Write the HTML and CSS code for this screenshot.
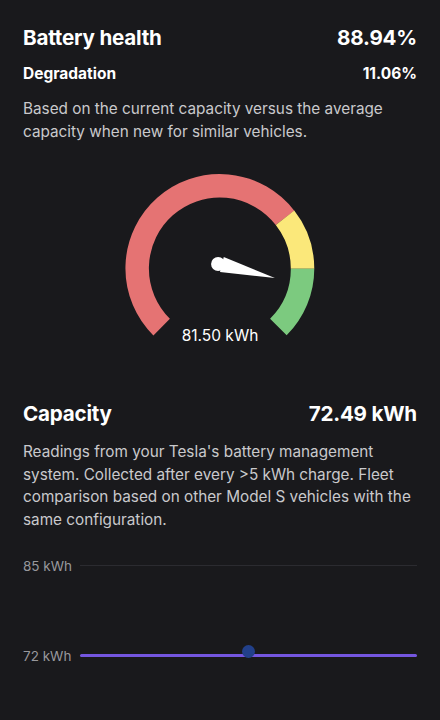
FILE: index.html
```html
<!DOCTYPE html>
<html>
<head>
<meta charset="utf-8">
<link rel="stylesheet" href="styles.css">
</head>
<body>
<main class="page">
  <section class="health">
    <div class="row title-row">
      <h1 class="title">Battery health</h1>
      <span class="title-value">88.94%</span>
    </div>
    <div class="row sub-row">
      <h2 class="subtitle">Degradation</h2>
      <span class="sub-value">11.06%</span>
    </div>
    <p class="desc">Based on the current capacity versus the average capacity when new for similar vehicles.</p>
  </section>

  <section class="gauge-wrap">
    <svg class="gauge" width="224" height="194" viewBox="0 0 224 194">
      <!-- center (112,102), r=88 ; arc from 225deg clockwise to -45deg -->
      <path d="M49.8 164.2 A88 88 0 1 1 181.3 47.8" fill="none" stroke="#e57373" stroke-width="25"/>
      <path d="M181.3 47.8 A88 88 0 0 1 200 102" fill="none" stroke="#fbe87a" stroke-width="25"/>
      <path d="M200 102 A88 88 0 0 1 174.2 164.2" fill="none" stroke="#7cca7f" stroke-width="25"/>
      <circle cx="110" cy="97" r="7.5" fill="#ffffff"/>
      <polygon points="116,89.5 170.5,112 112,105.5" fill="#ffffff"/>
    </svg>
    <div class="gauge-label">81.50 kWh</div>
  </section>

  <section class="capacity">
    <div class="row title-row">
      <h1 class="title">Capacity</h1>
      <span class="title-value">72.49 kWh</span>
    </div>
    <p class="desc">Readings from your Tesla's battery management system. Collected after every &gt;5 kWh charge. Fleet comparison based on other Model S vehicles with the same configuration.</p>
  </section>

  <section class="chart">
    <div class="chart-row top">
      <span class="axis">85 kWh</span>
      <div class="grid-line"></div>
    </div>
    <div class="chart-row bottom">
      <span class="axis">72 kWh</span>
      <div class="data-line">
        <span class="dot"></span>
      </div>
    </div>
  </section>
</main>
</body>
</html>
```

FILE: styles.css
```css
html, body {
  margin: 0;
  padding: 0;
  background: #19191c;
}
body {
  font-family: Inter, "Noto Sans", "Liberation Sans", sans-serif;
  color: #ffffff;
  width: 440px;
  height: 720px;
  overflow: hidden;
}
.page {
  padding: 24px 23px 0 23px;
}
.row {
  display: flex;
  justify-content: space-between;
  align-items: baseline;
}
.title, .title-value {
  margin: 0;
  font-size: 20.6px;
  font-weight: 700;
  letter-spacing: -0.2px;
  line-height: 28px;
}
.sub-row {
  margin-top: 11px;
}
.subtitle, .sub-value {
  margin: 0;
  font-size: 15.5px;
  font-weight: 700;
  line-height: 22px;
}
.desc {
  margin: 11.5px 0 0 0;
  font-size: 15.3px;
  line-height: 23px;
  color: #c9c9cc;
  font-weight: 400;
}
.gauge-wrap {
  position: relative;
  display: flex;
  flex-direction: column;
  align-items: center;
  margin-top: 30px;
  height: 182px;
}
.gauge {
  display: block;
}
.gauge-label {
  position: absolute;
  top: 153px;
  left: 0;
  right: 0;
  text-align: center;
  font-size: 15.5px;
  line-height: 20px;
  color: #ffffff;
}
.capacity {
  margin-top: 45px;
}
.capacity .desc {
  margin-top: 13.5px;
  line-height: 22.7px;
}
.chart {
  margin-top: 26px;
  display: flex;
  flex-direction: column;
  gap: 74px;
}
.chart-row {
  display: flex;
  align-items: center;
  gap: 8px;
  height: 16px;
}
.axis {
  flex: 0 0 49px;
  white-space: nowrap;
  font-size: 13.5px;
  color: #98989c;
}
.grid-line {
  flex: 1;
  height: 1px;
  background: #2b2b30;
}
.chart-row.bottom {
  position: relative;
  z-index: 0;
}
.data-line {
  position: relative;
  flex: 1;
  height: 3px;
  background: #7456df;
  border-radius: 2px;
  z-index: 0;
}
.dot {
  position: absolute;
  left: 162px;
  top: -9px;
  width: 13px;
  height: 13px;
  border-radius: 50%;
  background: #22408a;
  z-index: -1;
}
```
